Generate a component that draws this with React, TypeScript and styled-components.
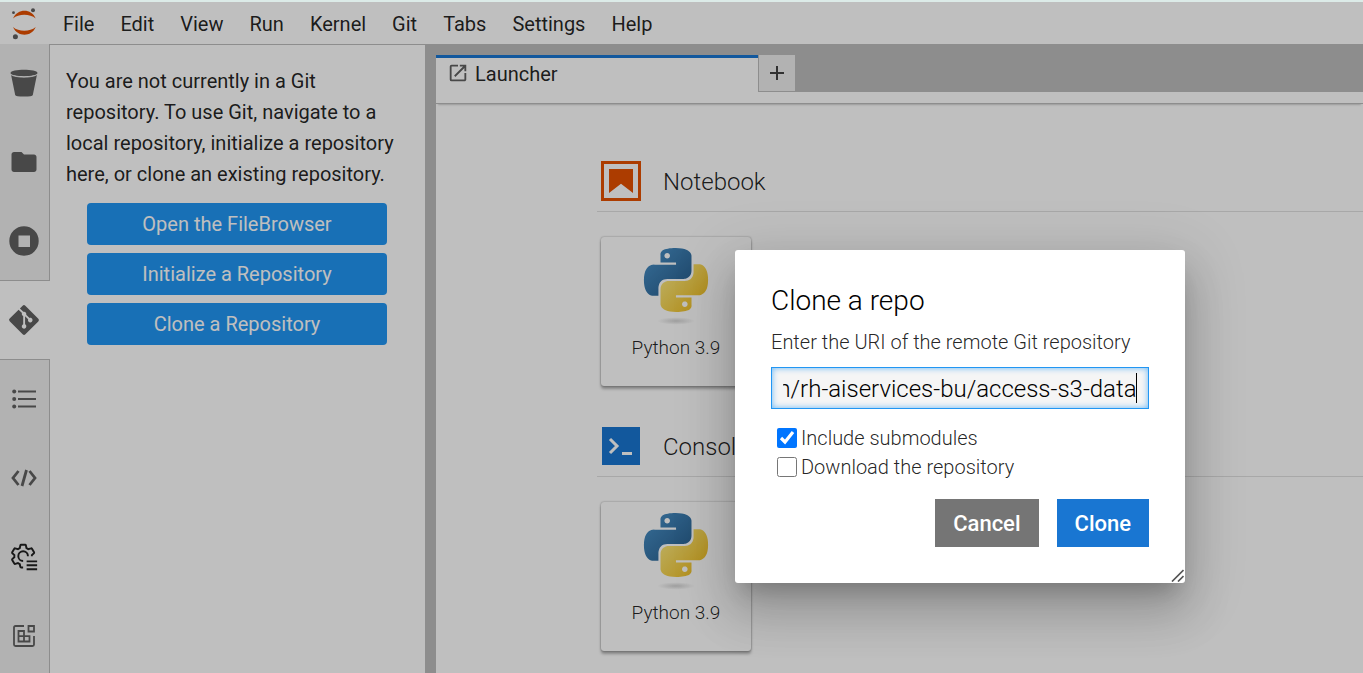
import React, { useEffect, useRef, useState } from "react";
import styled, { createGlobalStyle } from "styled-components";
import { FaGitAlt } from "react-icons/fa";

const GlobalStyle = createGlobalStyle`
  *, *::before, *::after { box-sizing: border-box; }
  body {
    margin: 0;
    background: #fff;
    color: rgba(0, 0, 0, 0.87);
    font-family: Roboto, "Liberation Sans", sans-serif;
    font-size: 20px;
    line-height: 31px;
  }
  button, input { font-family: inherit; }
`;

const Page = styled.div`
  position: relative;
  display: flex;
  flex-direction: column;
  height: 100vh;
  overflow: hidden;
  border-top: 2px solid #dcebe8;
`;

const MenuBar = styled.nav`
  flex: none;
  display: flex;
  align-items: center;
  height: 43px;
  padding-top: 2px;
  border-bottom: 1px solid #bdbdbd;
`;

const Logo = styled.svg`
  width: 26px;
  height: 32px;
  margin: 0 13px 0 11px;
`;

const MenuItem = styled.button`
  border: 0;
  background: none;
  padding: 0 13px;
  font-size: 20px;
  line-height: 40px;
  color: inherit;
`;

const Body = styled.div`
  flex: 1;
  display: flex;
  min-height: 0;
`;

const SideBar = styled.div`
  flex: none;
  display: flex;
  flex-direction: column;
  width: 50px;
  margin-top: -1px;
  background: #eee;
`;

const SideTab = styled.button<{ $active?: boolean; $dark?: boolean }>`
  flex: none;
  display: flex;
  align-items: center;
  justify-content: center;
  height: ${(p) => (p.$active ? "80px" : "79px")};
  margin-top: ${(p) => (p.$active ? "-1px" : "0")};
  padding: ${(p) => (p.$active ? "0 2px 0 0" : "0 2px 1px 0")};
  border: 0 solid #bdbdbd;
  border-width: ${(p) => (p.$active ? "1px 0" : "0 1px 0 0")};
  background: ${(p) => (p.$active ? "#fff" : "none")};
  color: ${(p) => (p.$dark ? "#212121" : "#616161")};
`;

const SideRest = styled.div`
  flex: 1;
  border-right: 1px solid #bdbdbd;
`;

const GitPanel = styled.aside`
  flex: none;
  width: 375px;
  padding: 21px 16px;
`;

const Notice = styled.p`
  margin: 0 0 13px;
`;

const GitActions = styled.div`
  display: flex;
  flex-direction: column;
  gap: 8px;
  padding: 0 22px 0 21px;
`;

const GitButton = styled.button`
  height: 42px;
  border: 0;
  border-radius: 4px;
  background: #2196f3;
  color: #fff;
  font-size: 20px;
`;

const Dock = styled.main`
  flex: 1;
  display: flex;
  flex-direction: column;
  min-width: 0;
  border-left: 11px solid #bdbdbd;
`;

const TabBar = styled.div`
  flex: none;
  display: flex;
  height: 47px;
  padding-top: 10px;
  background: #bdbdbd;
`;

const Tab = styled.div`
  display: flex;
  align-items: center;
  gap: 6px;
  width: 322px;
  padding: 0 11px 2px;
  border-top: 3px solid #1976d2;
  background: #fff;
  svg { color: #616161; margin-bottom: 3px; }
`;

const AddTab = styled.button`
  width: 38px;
  padding: 2px 0 0;
  border: 1px solid #bdbdbd;
  border-top: 0;
  background: #eee;
  color: #424242;
`;

const TabFoot = styled.div`
  flex: none;
  height: 12px;
  border-bottom: 1px solid #bdbdbd;
  background: #fff;
  box-shadow: 0 3px 2px -2px rgba(0, 0, 0, 0.2);
`;

const Launcher = styled.div`
  flex: 1;
  min-height: 0;
  overflow: hidden;
  padding: 46px 0 0 161px;
`;

const Section = styled.section`
  height: 265px;
`;

const SectionHead = styled.header`
  display: flex;
  align-items: center;
  gap: 22px;
  height: 62px;
  padding-left: 4px;
  border-bottom: 1px solid #e0e0e0;
`;

const SectionTitle = styled.h2`
  margin: 0;
  padding-top: 3px;
  font-size: 24px;
  font-weight: 300;
`;

const Card = styled.button`
  display: flex;
  flex-direction: column;
  align-items: center;
  width: 150px;
  height: 149px;
  margin: 25px 4px;
  padding: 11px 0 0;
  border: 0;
  border-radius: 3px;
  background: #fff;
  color: rgba(0, 0, 0, 0.87);
  font-size: 19px;
  font-weight: 300;
  box-shadow: 0 0 2px rgba(0, 0, 0, 0.4), 0 3px 3px rgba(0, 0, 0, 0.3);
`;

const CardLabel = styled.span`
  margin-top: 8px;
  line-height: 30px;
`;

const Overlay = styled.div`
  position: absolute;
  inset: 0;
  display: flex;
  justify-content: flex-end;
  align-items: flex-start;
  padding: 248px 178px 0 0;
  background: rgba(0, 0, 0, 0.25);
`;

const Dialog = styled.form`
  position: relative;
  display: flex;
  flex-direction: column;
  width: 450px;
  padding: 36px;
  border-radius: 3px;
  background: #fff;
  font-weight: 300;
  box-shadow: 0 15px 20px -9px rgba(0, 0, 0, 0.2), 0 30px 46px 4px rgba(0, 0, 0, 0.14),
    0 12px 57px 10px rgba(0, 0, 0, 0.12);
`;

const DialogTitle = styled.h1`
  margin: 0;
  font-size: 28px;
  line-height: 30px;
  font-weight: 300;
  color: #000;
`;

const FieldLabel = styled.label`
  margin: 11px 0 9px;
  line-height: 31px;
`;

const UriField = styled.div`
  position: relative;
  display: flex;
  &::after {
    content: "";
    position: absolute;
    top: 6px;
    right: 12px;
    width: 1px;
    height: 30px;
    background: #000;
  }
`;

const UriBox = styled.input`
  flex: 1;
  min-width: 0;
  height: 42px;
  padding: 2px 11px 0;
  border: 1px solid #2196f3;
  border-radius: 0;
  outline: 0;
  background: #f5f5f5;
  box-shadow: inset 0 0 6px #64b5f6;
  caret-color: transparent;
  color: #000;
  font-size: 24px;
  font-weight: 300;
`;

const Checks = styled.div`
  display: flex;
  flex-direction: column;
  padding: 14px 6px 18px;
`;

const Check = styled.label`
  display: flex;
  align-items: center;
  gap: 4px;
  line-height: 29px;
  input { width: 20px; height: 20px; margin: 0; }
  span { padding-top: 1px; line-height: 28px; }
`;

const DialogButtons = styled.div`
  display: flex;
  justify-content: flex-end;
  gap: 18px;
`;

const DialogButton = styled.button<{ $accept?: boolean }>`
  height: 48px;
  padding: 0 18px;
  border: 0;
  background: ${(p) => (p.$accept ? "#1976d2" : "#757575")};
  color: #fff;
  font-size: 22px;
  font-weight: 500;
`;

const Grip = styled.svg`
  position: absolute;
  right: 1px;
  bottom: 1px;
`;

const BucketIcon = () => (
  <svg width="28" height="28" viewBox="0 0 28 28" fill="currentColor">
    <path d="M1 5.500C5 9 23 9 27 5.500L22.800 26Q22.500 27.500 14 27.500T5.200 26Z" />
    <path d="M.5 4C.5-.2 27.500-.2 27.500 4C27.500 8.200.5 8.200.5 4Z" />
    <path d="M.8 5.500C5 9 23 9 27.200 5.500" fill="none" stroke="#eee" strokeWidth=".9" />
  </svg>
);

const FolderIcon = () => (
  <svg width="30" height="30" viewBox="0 0 24 24" fill="currentColor">
    <path d="M10 4H4c-1.100 0-1.990.9-1.990 2L2 18c0 1.100.9 2 2 2h16c1.100 0 2-.9 2-2V8c0-1.100-.9-2-2-2h-8l-2-2z" />
  </svg>
);

const RunningIcon = () => (
  <svg width="30" height="30" viewBox="0 0 30 30" fill="currentColor" fillRule="evenodd">
    <path d="M15 .3a14.700 14.700 0 1 0 0 29.400a14.700 14.700 0 1 0 0-29.400ZM9.500 9.500h11.500v11.500h-11.500Z" />
  </svg>
);

const ListIcon = () => (
  <svg width="24" height="20" viewBox="0 0 24 20" fill="currentColor">
    {[2, 9.500, 17].map((y) => (
      <g key={y}>
        <circle cx="2.200" cy={y + 0.5} r="2" />
        <rect x="6" y={y - 0.5} width="18" height="2" />
      </g>
    ))}
  </svg>
);

const CodeIcon = () => (
  <svg width="26" height="18" viewBox="0 0 26 18" fill="none" stroke="currentColor" strokeWidth="2.800">
    <path d="M7.500 2L2 9l5.500 7M18.500 2L24 9l-5.500 7M15.500 1L11 17" />
  </svg>
);

const GearListIcon = () => (
  <svg width="28" height="28" viewBox="1 1 32 32" fill="none" stroke="currentColor" strokeWidth="2.200">
    <path d="M26 16v-1.200l2.300-2a1 1 0 0 0 .2-1.200l-2.400-4.100a1 1 0 0 0-1.200-.4l-2.900 1a10 10 0 0 0-2.200-1.300l-.6-3a1 1 0 0 0-1-.8h-4.400a1 1 0 0 0-1 .8l-.6 3a10 10 0 0 0-2.200 1.300l-2.900-1a1 1 0 0 0-1.200.4l-2.400 4.100a1 1 0 0 0 .2 1.200l2.300 2a10 10 0 0 0 0 2.400l-2.300 2a1 1 0 0 0-.2 1.200l2.400 4.100a1 1 0 0 0 1.200.4l2.900-1a10 10 0 0 0 2.200 1.300l.6 3a1 1 0 0 0 1 .8h2.200" />
    <path d="M16 21.500a5.500 5.500 0 1 1 5.500-5.500M20 22h12M20 26.500h12M20 31h12" />
  </svg>
);

const ExtensionIcon = () => (
  <svg width="24" height="24" viewBox="0 0 24 24" fill="none" stroke="currentColor" strokeWidth="1.800">
    <path d="M12 2H3.500Q2 2 2 3.500v17Q2 22 3.500 22h17Q22 22 22 20.500V12M16.500 2H22v5.500h-5.500ZM6.500 7H12v10.500H6.500ZM6.500 12.200h11v5.300H12" />
  </svg>
);

const LauncherIcon = () => (
  <svg width="22" height="22" viewBox="0 0 24 24" fill="currentColor">
    <path d="M19 19H5V5h7V3H5a2 2 0 0 0-2 2v14a2 2 0 0 0 2 2h14c1.100 0 2-.9 2-2v-7h-2v7zM14 3v2h3.590l-9.830 9.830 1.410 1.410L19 6.410V10h2V3h-7z" />
  </svg>
);

const NotebookIcon = () => (
  <svg width="40" height="40" viewBox="0 0 40 40">
    <path d="M1.500 1.500h37v37h-37Z" fill="none" stroke="#e65100" strokeWidth="3" />
    <path d="M8 8h24v24L20 22.700 8 32Z" fill="#e65100" />
  </svg>
);

const ConsoleIcon = () => (
  <svg width="40" height="40" viewBox="0 0 40 40">
    <path d="M1 1h38v38H1Z" fill="#1976d2" />
    <path d="M9 13l7 7-7 7M21 27.500h10" fill="none" stroke="#fff" strokeWidth="3" />
  </svg>
);

const PythonIcon = () => (
  <svg width="66" height="77" viewBox="-.4 0 24.800 28.900">
    <defs>
      <linearGradient id="pyBlue" x1="0" y1="0" x2="1" y2="1">
        <stop offset="0" stopColor="#4a94cc" />
        <stop offset="1" stopColor="#265a88" />
      </linearGradient>
      <linearGradient id="pyYellow" x1=".1" y1=".1" x2=".9" y2=".8">
        <stop offset="0" stopColor="#fbe980" />
        <stop offset="1" stopColor="#efbf26" />
      </linearGradient>
      <radialGradient id="pyShade">
        <stop offset="0" stopColor="#a8a8a8" stopOpacity=".5" />
        <stop offset="1" stopColor="#a8a8a8" stopOpacity="0" />
      </radialGradient>
    </defs>
    <ellipse cx="12" cy="27.400" rx="7" ry="1.400" fill="url(#pyShade)" />
    <path
      fill="url(#pyBlue)"
      d="M14.250.18l.9.2.73.26.59.3.45.32.34.34.25.34.16.33.1.3.04.26.02.2-.01.13V8.500l-.05.63-.13.55-.21.46-.26.38-.3.31-.33.25-.35.19-.35.14-.33.1-.3.07-.26.04-.21.02H8.770l-.69.05-.59.14-.5.22-.41.27-.33.32-.27.35-.2.36-.15.37-.1.35-.07.32-.04.27-.02.21v3.060H3.170l-.21-.03-.28-.07-.32-.12-.35-.18-.36-.26-.36-.36-.35-.46-.32-.59-.28-.73-.21-.88-.14-1.050-.05-1.230.06-1.220.16-1.040.24-.87.32-.71.36-.57.4-.44.42-.33.42-.24.4-.16.36-.1.32-.05.24-.01h.16l.06.01h8.160v-.83H6.180l-.01-2.750-.02-.37.05-.34.11-.31.17-.28.25-.26.31-.23.38-.2.44-.18.51-.15.58-.12.64-.1.71-.06.77-.04.84-.02 1.270.05zm-6.300 1.980l-.23.33-.08.41.08.41.23.34.33.22.41.09.41-.09.33-.22.23-.34.08-.41-.08-.41-.23-.33-.33-.22-.41-.09-.41.09z"
    />
    <path
      fill="url(#pyYellow)"
      d="M21.040 6.110l.28.06.32.12.35.18.36.27.36.35.35.47.32.59.28.73.21.88.14 1.040.05 1.230-.06 1.230-.16 1.040-.24.86-.32.71-.36.57-.4.45-.42.33-.42.24-.4.16-.36.09-.32.05-.24.02-.16-.01h-8.220v.82h5.840l.01 2.760.02.36-.05.34-.11.31-.17.29-.25.25-.31.24-.38.2-.44.17-.51.15-.58.13-.64.09-.71.07-.77.04-.84.01-1.270-.04-1.070-.14-.9-.2-.73-.25-.59-.3-.45-.33-.34-.34-.25-.34-.16-.33-.1-.3-.04-.25-.02-.2.01-.13v-5.340l.05-.64.13-.54.21-.46.26-.38.3-.32.33-.24.35-.2.35-.14.33-.1.3-.06.26-.04.21-.02.13-.01h5.840l.69-.05.59-.14.5-.21.41-.28.33-.32.27-.35.2-.36.15-.36.1-.35.07-.32.04-.28.02-.21V6.070h2.090l.14.01zm-6.470 14.250l-.23.33-.08.41.08.41.23.33.33.23.41.08.41-.08.33-.23.23-.33.08-.41-.08-.41-.23-.33-.33-.23-.41-.08-.41.08z"
    />
  </svg>
);

const menus = ["File", "Edit", "View", "Run", "Kernel", "Git", "Tabs", "Settings", "Help"];

const sections = [
  { title: "Notebook", Icon: NotebookIcon },
  { title: "Console", Icon: ConsoleIcon },
];

const CloneDialog = () => {
  const [uri, setUri] = useState("https://github.com/rh-aiservices-bu/access-s3-data");
  const box = useRef<HTMLInputElement>(null);

  useEffect(() => {
    const el = box.current;
    if (!el) return;
    el.focus();
    el.setSelectionRange(el.value.length, el.value.length);
    el.scrollLeft = el.scrollWidth;
  }, []);

  return (
    <Overlay>
      <Dialog role="dialog" aria-labelledby="clone-title" onSubmit={(e) => e.preventDefault()}>
        <DialogTitle id="clone-title">Clone a repo</DialogTitle>
        <FieldLabel htmlFor="uri">Enter the URI of the remote Git repository</FieldLabel>
        <UriField>
          <UriBox id="uri" ref={box} value={uri} spellCheck={false} onChange={(e) => setUri(e.target.value)} />
        </UriField>
        <Checks>
          <Check>
            <input type="checkbox" defaultChecked />
            <span>Include submodules</span>
          </Check>
          <Check>
            <input type="checkbox" />
            <span>Download the repository</span>
          </Check>
        </Checks>
        <DialogButtons>
          <DialogButton type="button">Cancel</DialogButton>
          <DialogButton type="submit" $accept>
            Clone
          </DialogButton>
        </DialogButtons>
        <Grip width="13" height="13" viewBox="0 0 13 13" stroke="#555" strokeWidth="1.700">
          <path d="M1 12.500L12.500 1M7 12.500L12.500 7" />
        </Grip>
      </Dialog>
    </Overlay>
  );
};

export default function App() {
  return (
    <>
      <GlobalStyle />
      <Page>
        <MenuBar>
          <Logo viewBox="0 0 26 32">
            <path d="M2 10.500C6.500.2 20.500.2 24.700 10.500C19 5.500 7.500 5.500 2 10.500Z" fill="#e65100" />
            <path d="M2 19C6.500 29.300 20.500 29.300 24.700 19C19 24 7.500 24 2 19Z" fill="#e65100" />
            <g fill="#616161">
              <circle cx="22" cy="2.300" r="2" />
              <circle cx="2.500" cy="4.700" r="1.400" />
              <circle cx="4.400" cy="28.800" r="2.500" />
            </g>
          </Logo>
          {menus.map((m) => (
            <MenuItem key={m}>{m}</MenuItem>
          ))}
        </MenuBar>
        <Body>
          <SideBar>
            <SideTab aria-label="Object storage"><BucketIcon /></SideTab>
            <SideTab aria-label="File browser"><FolderIcon /></SideTab>
            <SideTab aria-label="Running terminals and kernels"><RunningIcon /></SideTab>
            <SideTab aria-label="Git" $active><FaGitAlt size={34} /></SideTab>
            <SideTab aria-label="Table of contents"><ListIcon /></SideTab>
            <SideTab aria-label="Code snippets"><CodeIcon /></SideTab>
            <SideTab aria-label="Runtimes" $dark><GearListIcon /></SideTab>
            <SideTab aria-label="Extension manager"><ExtensionIcon /></SideTab>
            <SideRest />
          </SideBar>
          <GitPanel>
            <Notice>
              You are not currently in a Git repository. To use Git, navigate to a local repository,
              initialize a repository here, or clone an existing repository.
            </Notice>
            <GitActions>
              <GitButton>Open the FileBrowser</GitButton>
              <GitButton>Initialize a Repository</GitButton>
              <GitButton>Clone a Repository</GitButton>
            </GitActions>
          </GitPanel>
          <Dock>
            <TabBar>
              <Tab>
                <LauncherIcon />
                Launcher
              </Tab>
              <AddTab aria-label="New launcher">
                <svg width="14" height="14" viewBox="0 0 14 14" stroke="currentColor" strokeWidth="2">
                  <path d="M7 0v14M0 7h14" />
                </svg>
              </AddTab>
            </TabBar>
            <TabFoot />
            <Launcher>
              {sections.map(({ title, Icon }) => (
                <Section key={title}>
                  <SectionHead>
                    <Icon />
                    <SectionTitle>{title}</SectionTitle>
                  </SectionHead>
                  <Card>
                    <PythonIcon />
                    <CardLabel>Python 3.9</CardLabel>
                  </Card>
                </Section>
              ))}
            </Launcher>
          </Dock>
        </Body>
        <CloneDialog />
      </Page>
    </>
  );
}
